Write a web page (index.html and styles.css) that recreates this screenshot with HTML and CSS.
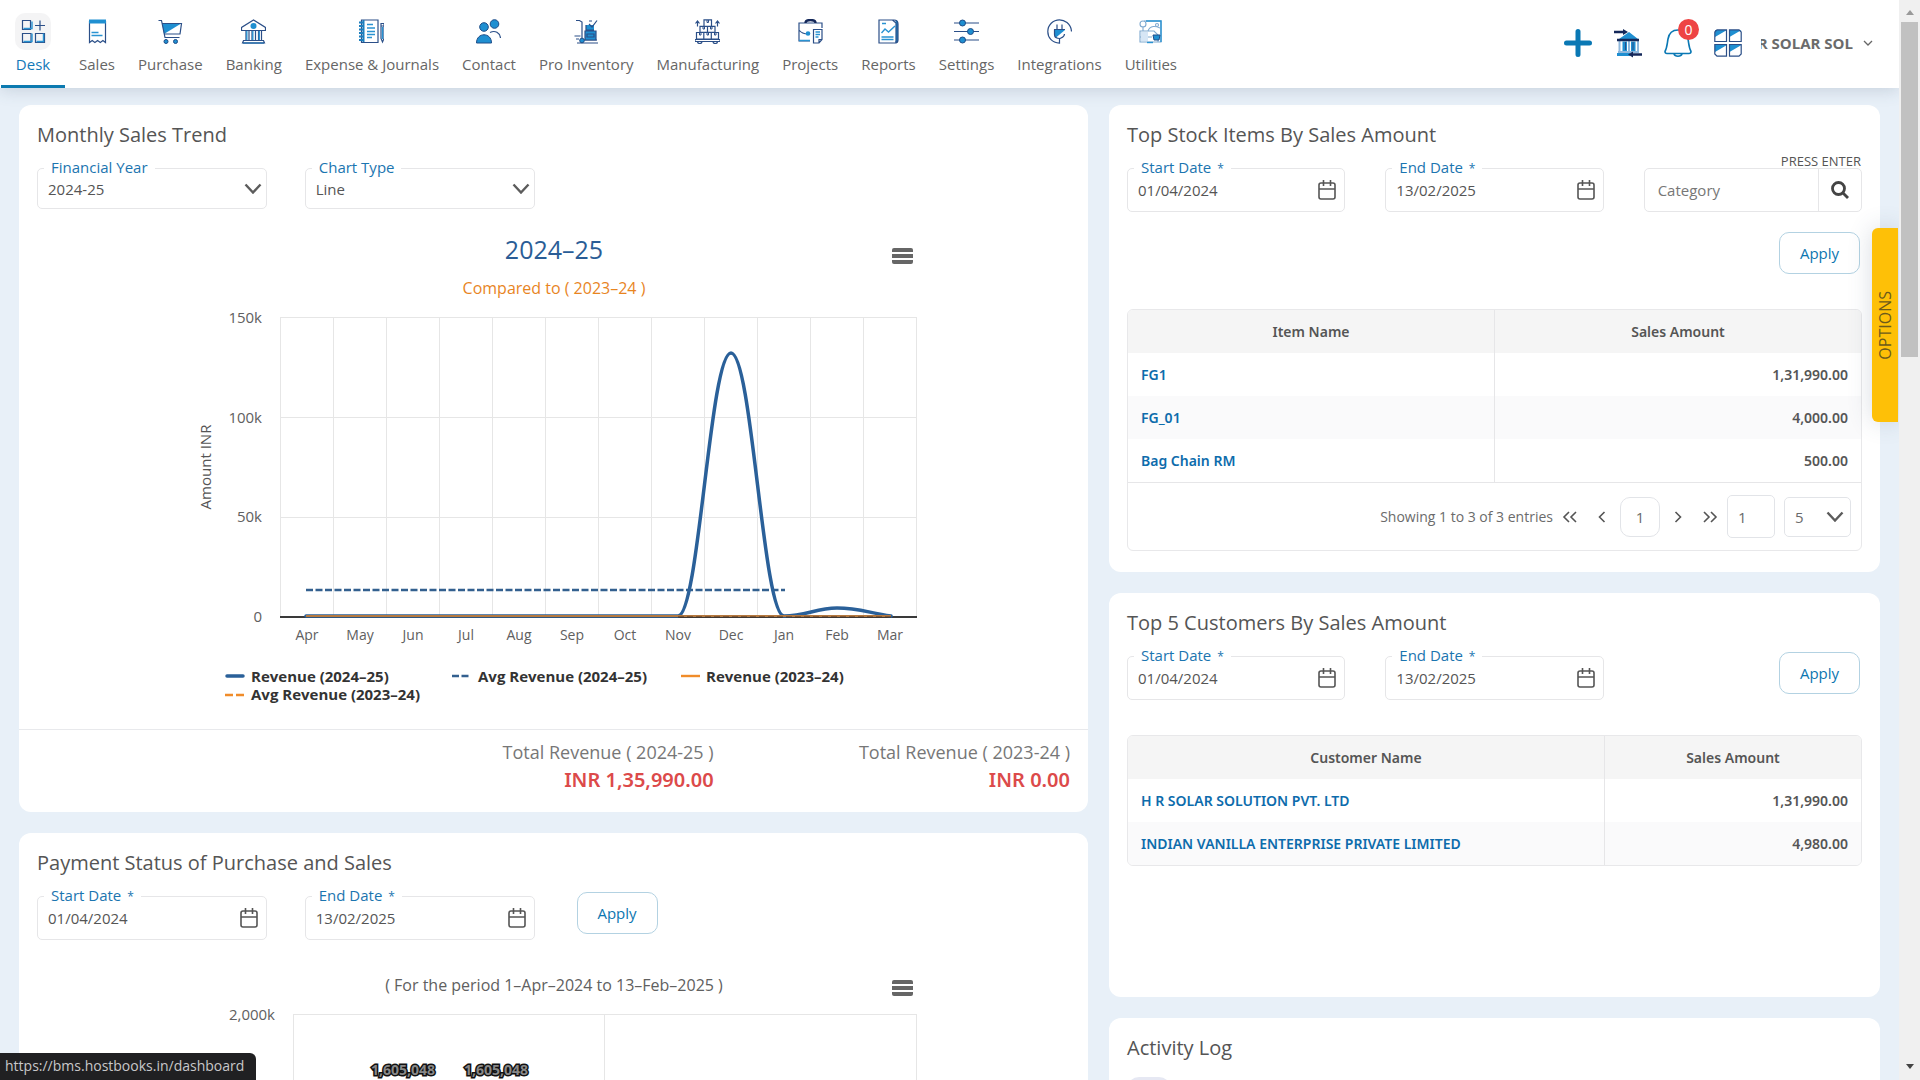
FILE: index.html
```html
<!DOCTYPE html>
<html lang="en">
<head>
<meta charset="utf-8">
<meta name="viewport" content="width=device-width, initial-scale=1">
<title>Dashboard</title>
<link rel="stylesheet" href="styles.css">
</head>
<body>
<div class="app">
  <header class="topbar">
    <nav class="nav" aria-label="Main">
      <a class="nav-item active" href="#desk">
        <span class="nav-icon"><svg class="ic" viewBox="0 0 25 25"><path class="n" d="M1.5 1.5h8v9h-8zM1.5 14.500h8.500v9h-8.500zM14.500 14.500h9v9h-9zM19 1.500v10M14 6.500h10"/><path class="b" d="M2.500 9.500h8.500V2.500M2.500 22.500h8.500v-8M15.500 22.500h7v-8"/></svg></span>
        <span>Desk</span></a>
      <a class="nav-item" href="#sales">
        <span class="nav-icon"><svg class="ic" viewBox="0 0 25 25"><path class="n" d="M4.500 2v21.500l2.700-2 2.700 2 2.700-2 2.700 2 2.600-2 2.600 2V2"/><path class="fb" d="M4 .5h17v4H4z"/><path class="b" d="M6.500 13.500h7M6.500 16.500h11"/></svg></span>
        <span>Sales</span></a>
      <a class="nav-item" href="#purchase">
        <span class="nav-icon"><svg class="ic" viewBox="0 0 25 25"><path class="fb" d="M4 4h20L6 15z"/><path class="n" d="M.5 1.500h3L7 18.500h14.500M4.200 4.500h19.300l-1.500 10.500H6.500"/><circle class="f2" cx="8" cy="22.500" r="2"/><circle class="f2" cx="17.500" cy="22.500" r="2"/></svg></span>
        <span>Purchase</span></a>
      <a class="nav-item" href="#banking">
        <span class="nav-icon"><svg class="ic" viewBox="0 0 25 25"><path class="n" d="M.5 11.500V8.500L12.500 1l12 7.500v3zM5 12v9M8 12v9M11 12v9M14.500 12v9M17.500 12v9M20.500 12v9"/><path class="b" d="M5.800 12v9M11.800 12v9M18.300 12v9M2 24h21"/><path class="n" d="M2.500 21.500h20l1 2.500h-22z"/><circle class="fb" cx="12.500" cy="7" r="3"/></svg></span>
        <span>Banking</span></a>
      <a class="nav-item" href="#expense">
        <span class="nav-icon"><svg class="ic" viewBox="0 0 25 25"><path class="n" d="M2.500 1h16.500v22.500H2.500zM22 4.500h3v15l-1.500 3.500-1.500-3.500zM22 7h3"/><path class="b2" d="M4.500 1v22M0 3.500h4M0 7h4M0 10.500h4M0 14h4M0 17.500h4M0 21h4"/><path class="b" d="M8 5.500h6M8 9h8M8 12.500h8M8 15.500h8M8 18.500h5M23.500 8v12"/></svg></span>
        <span>Expense &amp; Journals</span></a>
      <a class="nav-item" href="#contact">
        <span class="nav-icon"><svg class="ic" viewBox="0 0 25 25"><path class="n" d="M14 13.500c5-2.500 10 0 10.500 5.500"/><circle class="f2" cx="18.500" cy="5" r="4.300"/><circle class="f2" cx="8" cy="8" r="4.300"/><path class="f2" d="M.5 24c0-11 15-11 15 0z"/></svg></span>
        <span>Contact</span></a>
      <a class="nav-item" href="#inventory">
        <span class="nav-icon"><svg class="ic" viewBox="0 0 25 25"><path class="n" d="M2 1.500h3.500L8 3v16M9 21h14M3 24h21M.5 17h6M2 20h3"/><path class="fb" d="M11 12h11v9H11zM12 6h8v5h-8z"/><path class="n" d="M11 12h11v9H11zM13 15h7v3h-7zM12 6v5h8M15 5l3 3 5-6.500M15 2h3"/><circle class="f2" cx="8" cy="21.500" r="2.300"/></svg></span>
        <span>Pro Inventory</span></a>
      <a class="nav-item" href="#manufacturing">
        <span class="nav-icon"><svg class="ic" viewBox="0 0 25 25"><path class="n" d="M9 .8h7.500v6.500H9zM5 7.300h7.500v6H5zM12.500 7.300H20v6h-7.500zM1.500 13.500h7.300v6.500H1.500zM8.800 13.500h7.500v6.500H8.800zM16.300 13.500h7.200v6.500h-7.200zM0 20.500h25v2H0zM2.500 7.500V2.500M.5 4.500l2-2.500 2 2.500M22.500 7.500V2.500M20.500 4.500l2-2.500 2 2.500"/><path class="n2" d="M12 1v2.500h1.500V1M8 7.500v2.500h1.500V7.500M15.500 7.500v2.500H17V7.500M4.500 14v2H6v-2M12 14v2h1.500v-2M19.500 14v2H21v-2"/><path class="n" d="M2.500 23c.5 2 4 2 4.500 0M18 23c.5 2 4 2 4.500 0"/></svg></span>
        <span>Manufacturing</span></a>
      <a class="nav-item" href="#projects">
        <span class="nav-icon"><svg class="ic" viewBox="0 0 25 25"><path class="n" d="M24 9V4H1v18h11M1 11c3 4 6 4 9 4M15.500 10.500H24v10L21 24h-5.500zM24 20.500h-3V24"/><path class="k" d="M7.500 4c0-4 10-4 10 0"/><path class="b" d="M1 21.500h11M17.500 13h4.500M17.500 15.500h4.500M17.500 18h3"/><circle class="fb" cx="10" cy="14.500" r="2.300"/></svg></span>
        <span>Projects</span></a>
      <a class="nav-item" href="#reports">
        <span class="nav-icon"><svg class="ic" viewBox="0 0 25 25"><path class="b2" d="M19.500 2c1.500 0 1.500 1 1.500 2v18c0 1-1 1-1.500 1"/><path class="n" d="M3 1h13.500L20 4v20H3zM3 1h15c3 0 4 1.500 4 4v16c0 2-1 3-3 3"/><path class="b" d="M5.500 14l3.500-4 3.500 3L19 7M6 4.500h4M5.500 18h12M5.500 20.500h12"/></svg></span>
        <span>Reports</span></a>
      <a class="nav-item" href="#settings">
        <span class="nav-icon"><svg class="ic" viewBox="0 0 25 25"><path class="n" d="M0 4h25M0 12.500h25M0 21h25"/><circle class="f2" cx="8.500" cy="4" r="3"/><circle class="f2" cx="16.500" cy="12.500" r="3"/><circle class="f2" cx="8.500" cy="21" r="3"/></svg></span>
        <span>Settings</span></a>
      <a class="nav-item" href="#integrations">
        <span class="nav-icon"><svg class="ic" viewBox="0 0 25 25"><path class="n" d="M24.500 12.500C24 4 17 .8 12.500.8 6 .8.800 6 .8 12.500c0 6 4 11 11.700 11.700v-5"/><path class="fb" d="M7 11h11L9 18.500 7 16z"/><path class="n" d="M7 10.500h11M7.500 10.500v5c0 3 3 4 5.500 4 2-1 4.500-1.500 4.500-4.500M10 5.500v5M15 5.500v5"/></svg></span>
        <span>Integrations</span></a>
      <a class="nav-item" href="#utilities">
        <span class="nav-icon"><svg class="ic" viewBox="0 0 25 25"><path class="l" d="M6 2h17v21H9M2 12h14l4 4v7H2zM2 18h12M5 7.500v5"/><path class="fl" d="M3 13h7v9H3z"/><path class="b" d="M8 2h15v21"/><path class="l" d="M10 12c2-6 8-5 12-3"/><circle class="l" cx="5" cy="5" r="3"/><circle class="l" cx="19" cy="6" r="1.500"/><path class="f2" d="M15 16h7l-1 5h-5z"/><path class="b" d="M9 23.500h6"/></svg></span>
        <span>Utilities</span></a>
    </nav>
    <div class="tools">
      <button class="tool" type="button" aria-label="Create"><svg class="ic-l" viewBox="0 0 28 28"><path class="plus" d="M14 2.500v23M2.500 14h23"/></svg></button>
      <button class="tool" type="button" aria-label="Bank transfer"><svg class="ic-l" viewBox="0 0 28 28"><path class="fb" d="M15 3l9 7H5zM8.500 12.500h4.500V22H8.500zM17 12.500h4.500V22H17zM3 24h13v3H3z"/><path class="l2" d="M5.500 12v11M15 12v11M24 12v11M4 23h21"/><path class="n2" d="M11.500 13v8M19 13v8"/><path class="k" d="M3 11h22M0 3h10M17 25.500h11"/><path class="fk" d="M9 0l5 3-5 3zM19 22.500l-5 3 5 3z"/></svg></button>
      <button class="tool bell" type="button" aria-label="Notifications"><svg class="ic-l" viewBox="0 0 28 28"><path class="bl" d="M1 22.500C3 19 3 16 4 10c1-6 5-9 10-9s9 3 10 9c1 6 1 9 3 12.500 0 1.500-1 2-2 2H3c-1 0-2-.5-2-2zM10 25c1 3 7 3 8 0"/></svg><span class="badge">0</span></button>
      <button class="tool" type="button" aria-label="Apps"><svg class="ic-l" viewBox="0 0 28 28"><path class="fb" d="M1 1h12L1 8zM15.500 1h12l-12 7zM1 16h12L1 23zM15.500 16h12l-12 7z"/><path class="n" d="M3 .8h9.500v11.700H.8V3zM15.500.8H25L27.200 3v9.500H15.500zM.8 15.500h11.700v11.700H3L.8 25zM15.500 15.500h11.700V25L25 27.200h-9.500z"/></svg></button>
      <button class="company" type="button"><span class="company-name">R SOLAR SOL</span><svg class="caret" viewBox="0 0 10 6"><path d="M1 1l4 4 4-4"/></svg></button>
    </div>
  </header>

  <main class="board">
    <div class="col">
      <section class="card">
        <h2>Monthly Sales Trend</h2>
        <div class="fields four">
          <div class="field select"><label for="fy">Financial Year</label>
            <select id="fy"><option>2024-25</option></select>
            <svg class="chev" viewBox="0 0 18 11"><path d="M1.500 1.500L9 9.500l7.500-8"/></svg></div>
          <div class="field select"><label for="ct">Chart Type</label>
            <select id="ct"><option>Line</option></select>
            <svg class="chev" viewBox="0 0 18 11"><path d="M1.500 1.500L9 9.500l7.500-8"/></svg></div>
        </div>
        <div class="chart">
          <svg class="plot" viewBox="183 220 740 490" role="img" aria-label="Monthly revenue, 2024-25 compared to 2023-24">
            <text class="t-title" x="553" y="259">2024–25</text>
            <text class="t-sub" x="553" y="294">Compared to ( 2023–24 )</text>
            <path class="grid" d="M279 317.500H916M279 417.500H916M279 517.500H916M279.500 317V617M332.500 317V617M385.500 317V617M438.500 317V617M491.500 317V617M544.500 317V617M597.500 317V617M650.500 317V617M703.500 317V617M756.500 317V617M809.500 317V617M862.500 317V617M915.500 317V617"/>
            <g class="t-y"><text x="261" y="323">150k</text><text x="261" y="423">100k</text><text x="261" y="522">50k</text><text x="261" y="622">0</text></g>
            <text class="t-axis" transform="translate(210 467) rotate(-90)">Amount INR</text>
            <path class="axis" d="M279 617H916"/>
            <path class="s-avg" d="M305 590H784"/>
            <path class="s-rev" d="M305 616H677C698 616 709 353 730 353S762 616 783 616C805 616 815 608 836 608C858 608 868 613 890 616"/>
            <path class="s-prev" d="M305 616H890"/>
            <path class="s-zero" d="M677 617H890"/>
            <g class="t-x"><text x="306" y="640">Apr</text><text x="359" y="640">May</text><text x="412" y="640">Jun</text><text x="465" y="640">Jul</text><text x="518" y="640">Aug</text><text x="571" y="640">Sep</text><text x="624" y="640">Oct</text><text x="677" y="640">Nov</text><text x="730" y="640">Dec</text><text x="783" y="640">Jan</text><text x="836" y="640">Feb</text><text x="889" y="640">Mar</text></g>
            <path class="s-rev" d="M226 676H242"/><path class="s-avg" d="M451 676H470"/><path class="s-leg" d="M680 676H699"/><path class="s-leg dash" d="M224 695H243"/>
            <g class="t-leg"><text x="250" y="682">Revenue (2024–25)</text><text x="477" y="682">Avg Revenue (2024–25)</text><text x="705" y="682">Revenue (2023–24)</text><text x="250" y="700">Avg Revenue (2023–24)</text></g>
          </svg>
          <button class="menu" type="button" aria-label="Chart menu"></button>
        </div>
        <div class="totals">
          <p class="total"><span>Total Revenue ( 2024-25 )</span><strong>INR 1,35,990.00</strong></p>
          <p class="total"><span>Total Revenue ( 2023-24 )</span><strong>INR 0.00</strong></p>
        </div>
      </section>

      <section class="card">
        <h2>Payment Status of Purchase and Sales</h2>
        <div class="fields four">
          <div class="field"><label for="ps">Start Date <i>*</i></label><input id="ps" type="text" value="01/04/2024">
            <svg class="cal" viewBox="0 0 18 20"><rect x="1" y="3" width="16" height="16" rx="2"/><path d="M1 9h16M5.500 0v6M12.500 0v6"/></svg></div>
          <div class="field"><label for="pe">End Date <i>*</i></label><input id="pe" type="text" value="13/02/2025">
            <svg class="cal" viewBox="0 0 18 20"><rect x="1" y="3" width="16" height="16" rx="2"/><path d="M1 9h16M5.500 0v6M12.500 0v6"/></svg></div>
          <div class="inline-apply"><button class="apply" type="button">Apply</button></div>
        </div>
        <div class="chart second">
          <svg class="plot" viewBox="183 960 740 300" role="img" aria-label="Payment status for the period">
            <text class="t-cap" x="553" y="990">( For the period 1–Apr–2024 to 13–Feb–2025 )</text>
            <path class="grid" d="M292 1013.500H916M292.500 1013V1260M603.500 1013V1260M915.500 1013V1260"/>
            <g class="t-y"><text x="274" y="1019">2,000k</text></g>
            <g class="t-val"><text x="402" y="1074">1,605,048</text><text x="495" y="1074">1,605,048</text></g>
          </svg>
          <button class="menu" type="button" aria-label="Chart menu"></button>
        </div>
      </section>
    </div>

    <div class="col">
      <section class="card">
        <h2>Top Stock Items By Sales Amount</h2>
        <div class="fields three">
          <div class="field"><label for="ss">Start Date <i>*</i></label><input id="ss" type="text" value="01/04/2024">
            <svg class="cal" viewBox="0 0 18 20"><rect x="1" y="3" width="16" height="16" rx="2"/><path d="M1 9h16M5.500 0v6M12.500 0v6"/></svg></div>
          <div class="field"><label for="se">End Date <i>*</i></label><input id="se" type="text" value="13/02/2025">
            <svg class="cal" viewBox="0 0 18 20"><rect x="1" y="3" width="16" height="16" rx="2"/><path d="M1 9h16M5.500 0v6M12.500 0v6"/></svg></div>
          <div class="field search"><label for="cat">PRESS ENTER</label><input id="cat" type="text" placeholder="Category">
            <button type="button" aria-label="Search"><svg viewBox="0 0 18 18"><circle cx="7.500" cy="7.500" r="6"/><path d="M12 12l5 5"/></svg></button></div>
        </div>
        <div class="apply-row"><button class="apply" type="button">Apply</button></div>
        <div class="grid-box">
          <table class="items">
            <thead><tr><th>Item Name</th><th>Sales Amount</th></tr></thead>
            <tbody>
              <tr><td><a href="#fg1">FG1</a></td><td>1,31,990.00</td></tr>
              <tr><td><a href="#fg01">FG_01</a></td><td>4,000.00</td></tr>
              <tr><td><a href="#bag">Bag Chain RM</a></td><td>500.00</td></tr>
            </tbody>
          </table>
          <div class="pager">
            <span>Showing 1 to 3 of 3 entries</span>
            <div class="pages">
              <button type="button" aria-label="First page"><svg viewBox="0 0 16 12"><path d="M7 1L2 6l5 5M14 1L9 6l5 5"/></svg></button>
              <button type="button" aria-label="Previous page"><svg viewBox="0 0 16 12"><path d="M10.500 1l-5 5 5 5"/></svg></button>
              <button class="current" type="button">1</button>
              <button type="button" aria-label="Next page"><svg viewBox="0 0 16 12"><path d="M5.500 1l5 5-5 5"/></svg></button>
              <button type="button" aria-label="Last page"><svg viewBox="0 0 16 12"><path d="M2 1l5 5-5 5M9 1l5 5-5 5"/></svg></button>
            </div>
            <input class="goto" type="text" value="1" aria-label="Go to page">
            <div class="size"><select aria-label="Rows per page"><option>5</option></select>
              <svg class="chev" viewBox="0 0 18 11"><path d="M1.500 1.500L9 9.500l7.500-8"/></svg></div>
          </div>
        </div>
      </section>

      <section class="card customers-card">
        <h2>Top 5 Customers By Sales Amount</h2>
        <div class="fields three">
          <div class="field"><label for="cs">Start Date <i>*</i></label><input id="cs" type="text" value="01/04/2024">
            <svg class="cal" viewBox="0 0 18 20"><rect x="1" y="3" width="16" height="16" rx="2"/><path d="M1 9h16M5.500 0v6M12.500 0v6"/></svg></div>
          <div class="field"><label for="ce">End Date <i>*</i></label><input id="ce" type="text" value="13/02/2025">
            <svg class="cal" viewBox="0 0 18 20"><rect x="1" y="3" width="16" height="16" rx="2"/><path d="M1 9h16M5.500 0v6M12.500 0v6"/></svg></div>
          <div class="inline-apply end"><button class="apply" type="button">Apply</button></div>
        </div>
        <div class="grid-box">
          <table class="customers">
            <thead><tr><th>Customer Name</th><th>Sales Amount</th></tr></thead>
            <tbody>
              <tr><td><a href="#hr">H R SOLAR SOLUTION PVT. LTD</a></td><td>1,31,990.00</td></tr>
              <tr><td><a href="#iv">INDIAN VANILLA ENTERPRISE PRIVATE LIMITED</a></td><td>4,980.00</td></tr>
            </tbody>
          </table>
        </div>
      </section>

      <section class="card">
        <h2>Activity Log</h2>
        <span class="avatar"></span>
      </section>
    </div>
  </main>
  <button class="options" type="button"><span>OPTIONS</span></button>
  <div class="status">https://bms.hostbooks.in/dashboard</div>
</div>
<div class="scrollbar" aria-hidden="true"><span class="arrow up"></span><span class="thumb"></span><span class="arrow down"></span></div>
</body>
</html>
```
FILE: styles.css
```css
* { box-sizing: border-box; }
body {
  margin: 0;
  height: 100vh;
  overflow: hidden;
  display: flex;
  font: 15px/20px "Open Sans", "Noto Sans", sans-serif;
  color: #555;
  background: #e8f0f8;
}
a { color: inherit; text-decoration: none; }
button, input, select { font: inherit; color: inherit; margin: 0; }
button { background: none; border: 0; padding: 0; cursor: pointer; }
svg { display: block; fill: none; }

.app { position: relative; flex: 1; min-width: 0; overflow: hidden; }

/* Icon strokes and fills */
.ic { width: 25px; height: 25px; }
.ic-l { width: 28px; height: 28px; overflow: visible; }
.n { stroke: #2b4f88; stroke-width: 1.2; }
.n2 { stroke: #2b4f88; stroke-width: 1; }
.b { stroke: #2a93d2; stroke-width: 1.4; }
.b2 { stroke: #1c7fbe; stroke-width: 2; }
.k { stroke: #14285a; stroke-width: 2.4; }
.l { stroke: #7fa9d0; stroke-width: 1.1; }
.l2 { stroke: #8fb8dc; stroke-width: 2; }
.fb { fill: #1f8fd1; }
.fl { fill: #d6e6f5; }
.fk { fill: #14285a; }
.f2 { fill: #1f8fd1; stroke: #1d4c88; stroke-width: 1; }
.bl { stroke: #0a78b4; stroke-width: 1.6; }
.plus { stroke: #0a78b4; stroke-width: 5; stroke-linecap: round; }

/* Top bar */
.topbar {
  position: relative;
  display: flex;
  justify-content: space-between;
  height: 88px;
  padding: 0 26px 0 1px;
  background: #fff;
  box-shadow: 0 2px 16px rgba(60, 80, 110, .2);
}
.nav { display: flex; gap: 1px; }
.nav-item {
  display: flex;
  flex-direction: column;
  align-items: center;
  gap: 4px;
  padding: 13px 11px 0;
  white-space: nowrap;
  color: #666;
}
.nav-item.active {
  padding: 13px 14px 0;
  margin-right: 2px;
  color: #1379b8;
  border-bottom: 3px solid #0c7ab0;
}
.nav-icon { display: flex; align-items: center; justify-content: center; width: 36px; height: 37px; border-radius: 10px; }
.active .nav-icon { background: #f4f4f5; }
.tools { display: flex; align-items: center; gap: 22px; padding-bottom: 3px; }
.tool { position: relative; }
.badge {
  position: absolute;
  left: 14px;
  top: -10px;
  width: 21px;
  height: 21px;
  border-radius: 50%;
  background: #ee4444;
  color: #fff;
  font-size: 14px;
  line-height: 21px;
  text-align: center;
}
.company { display: flex; align-items: center; gap: 10px; margin-left: -3px; }
.company-name {
  display: flex;
  justify-content: flex-end;
  width: 92px;
  overflow: hidden;
  white-space: nowrap;
  font-weight: 700;
  color: #6b6b6b;
}
.caret { width: 10px; height: 6px; stroke: #666; stroke-width: 1.3; }

/* Board */
.board {
  display: grid;
  grid-template-columns: 1069fr 771fr;
  gap: 21px;
  align-items: start;
  padding: 17px 19px;
}
.col { display: flex; flex-direction: column; gap: 21px; min-width: 0; }
.card { padding: 18px; border-radius: 12px; background: #fff; }
h2 { margin: 0 0 21px; font-size: 20px; line-height: 24px; font-weight: 400; }

.fields { display: grid; align-items: start; }
.four { grid-template-columns: repeat(4, 1fr); column-gap: 38px; }
.three { grid-template-columns: repeat(3, 1fr); column-gap: 40px; }
.field {
  position: relative;
  display: flex;
  align-items: center;
  height: 44px;
  border: 1px solid #e6e6e8;
  border-radius: 5px;
}
.field.select { height: 41px; }
.field label {
  position: absolute;
  left: 6px;
  top: -12px;
  padding: 0 7px;
  background: #fff;
  color: #1b75b0;
  white-space: nowrap;
}
.field label i { font-style: normal; font-size: 12px; margin-left: 2px; }
input, select {
  appearance: none;
  flex: 1;
  min-width: 0;
  width: 100%;
  height: 100%;
  padding: 0 10px;
  border: 0;
  outline: 0;
  background: transparent;
}
.chev { position: absolute; right: 4px; width: 18px; height: 11px; stroke: #5c5c5c; stroke-width: 2.4; pointer-events: none; }
.cal { position: absolute; right: 8px; width: 18px; height: 20px; stroke: #555; stroke-width: 1.6; }
.search label { left: auto; right: 0; top: -16px; padding: 0; font-size: 13px; line-height: 16px; background: none; color: #555; }
.search input { padding: 0 13px; }
.search input::placeholder { color: #777; opacity: 1; }
.search button { display: flex; align-items: center; justify-content: center; width: 43px; height: 100%; border-left: 1px solid #e6e6e8; }
.search svg { width: 18px; height: 18px; stroke: #444; stroke-width: 2.8; }
.apply {
  width: 81px;
  height: 42px;
  border: 1px solid #b3d2e2;
  border-radius: 10px;
  background: #fff;
  color: #0d76b0;
  font-weight: 500;
}
.inline-apply { margin-top: -4px; padding: 0 4px; }
.inline-apply.end, .apply-row { text-align: right; padding: 0 2px; }
.apply-row { margin-top: 20px; }

/* Charts */
.chart { position: relative; width: 740px; max-width: 100%; margin: 11px auto 19px; }
.chart.second { margin-top: 21px; }
.plot { width: 100%; height: auto; }
.menu {
  position: absolute;
  right: 11px;
  top: 28px;
  width: 21px;
  height: 16px;
  border-top: 4px solid #666;
  border-bottom: 4px solid #666;
  border-radius: 2px;
  background: linear-gradient(#666, #666) center / 100% 4px no-repeat;
}
.second .menu { top: 19px; }
.plot text { font-size: 14px; fill: #606060; }
.plot .t-title { font-size: 25px; fill: #2a5d96; text-anchor: middle; }
.plot .t-sub { font-size: 16px; fill: #e8851f; text-anchor: middle; }
.plot .t-cap { font-size: 16px; text-anchor: middle; }
.plot .t-axis { font-size: 15px; text-anchor: middle; fill: #555; }
.plot .t-y text { font-size: 15px; text-anchor: end; }
.t-x text { text-anchor: middle; }
.plot .t-leg text { font-size: 15px; font-weight: 700; fill: #333; }
.plot .t-val text { font-weight: 700; fill: #888; stroke: #111; stroke-width: 3px; paint-order: stroke; text-anchor: middle; }
.grid { stroke: #e6e6e6; }
.axis { stroke: #3a3a3a; stroke-width: 2; }
.s-rev { stroke: #2a6099; stroke-width: 3.5; stroke-linecap: round; }
.s-avg { stroke: #33608f; stroke-width: 2.4; stroke-dasharray: 7 2.5; }
.s-prev { stroke: #b5793f; stroke-width: 2; }
.s-zero { stroke: #4a3526; stroke-width: 1; stroke-dasharray: 6 3; }
.s-leg { stroke: #f08c2a; stroke-width: 2.4; }
.s-leg.dash { stroke-dasharray: 8 3; }

.totals {
  display: grid;
  grid-template-columns: repeat(3, 1fr);
  margin: 0 -18px -18px;
  padding: 10px 0 18px;
  border-top: 1px solid #e8e9ec;
}
.total { display: flex; flex-direction: column; gap: 2px; margin: 0; padding-right: 18px; text-align: right; font-size: 18px; line-height: 24px; color: #777; }
.total:first-child { grid-column: 2; }
.total strong { font-family: "Noto Sans", sans-serif; font-size: 20px; line-height: 28px; font-weight: 600; color: #dc4a4a; }

/* Tables */
.grid-box { margin: 35px 0 3px; border: 1px solid #e8e8ea; border-radius: 6px; overflow: hidden; }
table { width: 100%; border-collapse: collapse; table-layout: fixed; font-family: "Noto Sans", sans-serif; font-size: 14px; font-weight: 600; }
th, td { height: 43px; padding: 0 13px; }
th { font-weight: 600; background: #f5f5f5; }
th + th, td + td { border-left: 1px solid #e6e6e8; }
td + td { text-align: right; }
td a { color: #0d6cac; }
tbody tr:nth-child(even) { background: #fafafb; }
.customers th:first-child { width: 65%; }
.customers-card { min-height: 404px; }
.pager {
  display: flex;
  align-items: center;
  justify-content: flex-end;
  gap: 9px;
  height: 68px;
  padding-right: 10px;
  border-top: 1px solid #e6e6e8;
  font-size: 14px;
  color: #6b6b6b;
}
.pages { display: flex; align-items: center; gap: 16px; }
.pages svg { width: 16px; height: 12px; stroke: #555; stroke-width: 1.6; }
.pages .current { width: 40px; height: 40px; margin: 0 -6px; border: 1px solid #e2e4e8; border-radius: 10px; font-size: 15px; }
.goto, .size { flex: none; height: 43px; border: 1px solid #e2e4e8; border-radius: 5px; font-size: 15px; }
.goto { width: 48px; }
.size { position: relative; display: flex; align-items: center; width: 67px; height: 40px; }
.size .chev { right: 6px; }
.avatar { display: block; width: 44px; height: 44px; margin-top: -4px; border-radius: 12px; background: #e6e8f3; }

/* Overlays */
.options {
  position: absolute;
  right: 1px;
  top: 228px;
  width: 26px;
  height: 194px;
  border-radius: 6px 0 0 6px;
  background: #fec007;
  box-shadow: 0 0 24px rgba(60, 80, 110, .2);
  font-size: 16px;
  color: #6b5a1c;
}
.options span { display: block; margin: auto; writing-mode: vertical-rl; transform: rotate(180deg); }
.status {
  position: absolute;
  left: 0;
  bottom: 0;
  padding: 3px 12px 4px 5px;
  border-radius: 0 6px 0 0;
  background: #202022;
  color: #c8c8ca;
  font-size: 14px;
}
.scrollbar { display: flex; flex-direction: column; align-items: center; width: 21px; background: #f0f0f0; }
.arrow { border: 4px solid transparent; }
.up { margin: 6px 0 7px; border-bottom: 5px solid #999; }
.down { margin: auto 0 7px; border-top: 5px solid #444; }
.thumb { width: 17px; height: 31%; background: #c1c1c1; }
```
